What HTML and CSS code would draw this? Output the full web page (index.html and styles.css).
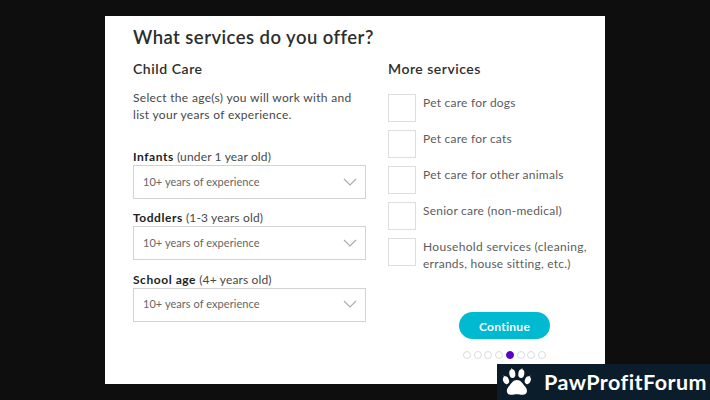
FILE: index.html
```html
<!DOCTYPE html>
<html lang="en">
<head>
    <meta charset="UTF-8">
    <meta name="viewport" content="width=device-width, initial-scale=1.0">
    <title>What services do you offer?</title>
    <link rel="stylesheet" href="styles.css">
</head>
<body>
    <div class="card">
        <h1>What services do you offer?</h1>

        <div class="columns">
            <div class="child-care">
                <h2>Child Care</h2>
                <p class="intro">Select the age(s) you will work with and<br>list your years of experience.</p>

                <div class="form-group">
                    <div class="label"><strong>Infants</strong> (under 1 year old)</div>
                    <div class="select">
                        <span>10+ years of experience</span>
                        <svg width="14" height="8" viewBox="0 0 14 8"><path d="M1 1l6 6 6-6"/></svg>
                    </div>
                </div>
                <div class="form-group">
                    <div class="label"><strong>Toddlers</strong> (1-3 years old)</div>
                    <div class="select">
                        <span>10+ years of experience</span>
                        <svg width="14" height="8" viewBox="0 0 14 8"><path d="M1 1l6 6 6-6"/></svg>
                    </div>
                </div>
                <div class="form-group">
                    <div class="label"><strong>School age</strong> (4+ years old)</div>
                    <div class="select">
                        <span>10+ years of experience</span>
                        <svg width="14" height="8" viewBox="0 0 14 8"><path d="M1 1l6 6 6-6"/></svg>
                    </div>
                </div>
            </div>

            <div class="more">
                <h2 class="more-title">More services</h2>
                <div class="option"><span class="box"></span><span>Pet care for dogs</span></div>
                <div class="option"><span class="box"></span><span>Pet care for cats</span></div>
                <div class="option"><span class="box"></span><span>Pet care for other animals</span></div>
                <div class="option"><span class="box"></span><span>Senior care (non-medical)</span></div>
                <div class="option"><span class="box"></span><span><span class="wide">Household services (cleaning,</span><br>errands, house sitting, etc.)</span></div>

                <div class="actions">
                    <button>Continue</button>
                    <div class="dots">
                        <i></i><i></i><i></i><i></i><i class="active"></i><i></i><i></i><i></i>
                    </div>
                </div>
            </div>
        </div>
    </div>

    <div class="watermark">
        <svg width="30" height="28" viewBox="0 0 30 28">
            <ellipse cx="4" cy="12.2" rx="2.9" ry="4" transform="rotate(-20 4 12.2)"/>
            <ellipse cx="10.3" cy="5.6" rx="3" ry="4.4" transform="rotate(-8 10.3 5.6)"/>
            <ellipse cx="19.3" cy="5.6" rx="3" ry="4.4" transform="rotate(8 19.3 5.6)"/>
            <ellipse cx="25.8" cy="12.2" rx="2.9" ry="4" transform="rotate(20 25.8 12.2)"/>
            <path d="M9.5 1.8L9 0l2 1.6zM20.1 1.8L20.6 0l-2 1.6zM2.3 9L.9 7.6l2.6.8zM27.5 9l1.4-1.4-2.6.8z"/>
            <path d="M14.9 12c3.6 0 5.3 3 7.3 5.5 1.7 2 3 3.5 2.7 6-.3 2.4-2.2 3.5-4.5 3.3-2-.2-3.5-.6-5.5-.6s-3.5.4-5.5.6c-2.3.2-4.2-.9-4.5-3.3-.3-2.500 1-4 2.700-6 2-2.500 3.700-5.500 7.300-5.500z"/>
        </svg>
        <span>PawProfitForum</span>
    </div>
</body>
</html>
```

FILE: styles.css
```css
* {
    box-sizing: border-box;
}
body {
    margin: 0;
    height: 400px;
    padding: 16px 105px;
    background: #0e0e0e;
    font-family: Lato, sans-serif;
    color: #484848;
    overflow: hidden;
}
.card {
    height: 368px;
    padding: 9px 0 0 28px;
    background: #fff;
}
h1 {
    margin: 0;
    font-size: 18.5px;
    line-height: 24px;
    font-weight: 600;
    letter-spacing: 0.45px;
    color: #2d2d2d;
    white-space: nowrap;
}
.columns {
    display: grid;
    grid-template-columns: 233px 217px;
    column-gap: 22px;
    padding-top: 10px;
}
h2 {
    margin: 0;
    font-size: 14px;
    line-height: 20px;
    font-weight: 600;
    letter-spacing: 0.55px;
    color: #2d2d2d;
    white-space: nowrap;
}
.intro {
    margin: 11px 0 25px;
    font-size: 12px;
    line-height: 16.5px;
    letter-spacing: 0.31px;
    white-space: nowrap;
}
.form-group {
    height: 61.3px;
}
.label {
    height: 17px;
    font-size: 12px;
    line-height: 17px;
    letter-spacing: 0.15px;
    white-space: nowrap;
}
.label strong {
    letter-spacing: 0.55px;
    color: #222;
}
.select {
    display: flex;
    align-items: center;
    justify-content: space-between;
    height: 34px;
    padding: 0 8px 1px 9px;
    border: 1px solid #d2d2d2;
    font-size: 11px;
    letter-spacing: 0.05px;
    color: #666;
}
.select span {
    padding-bottom: 1px;
}
.select svg {
    fill: none;
    stroke: #aaa;
    stroke-width: 1.1;
}
.more-title {
    margin-bottom: 15px;
    letter-spacing: 0.5px;
}
.option {
    display: flex;
    gap: 7px;
    height: 36px;
    font-size: 12px;
    line-height: 17px;
    letter-spacing: 0.24px;
    color: #5c5c5c;
    white-space: nowrap;
}
.box {
    flex: none;
    width: 28px;
    height: 28px;
    border: 1px solid #ddd;
}
.option .wide {
    letter-spacing: 0.33px;
}
.actions {
    display: flex;
    flex-direction: column;
    align-items: center;
    width: 91px;
    margin: 38px 0 0 71px;
}
button {
    width: 91px;
    height: 27px;
    padding: 2px 0 0;
    border: none;
    border-radius: 14px;
    background: #00bad1;
    color: #fff;
    font: bold 12px Lato, sans-serif;
    letter-spacing: 0.3px;
}
.dots {
    display: flex;
    gap: 2.8px;
    margin-top: 12px;
}
.dots i {
    width: 8px;
    height: 8px;
    border: 1px solid #d8dce0;
    border-radius: 50%;
}
.dots .active {
    border-color: #5a00c8;
    background: #5a00c8;
}
.watermark {
    position: absolute;
    right: 0;
    bottom: 0;
    display: flex;
    align-items: center;
    width: 213px;
    height: 36px;
    padding-left: 5px;
    gap: 12px;
    background: #0b1c2a;
    color: #fff;
    font-size: 21.5px;
    font-weight: bold;
    letter-spacing: 0.45px;
}
.watermark svg {
    flex: none;
    fill: #fff;
}
.watermark span {
    padding-bottom: 1px;
}
```
